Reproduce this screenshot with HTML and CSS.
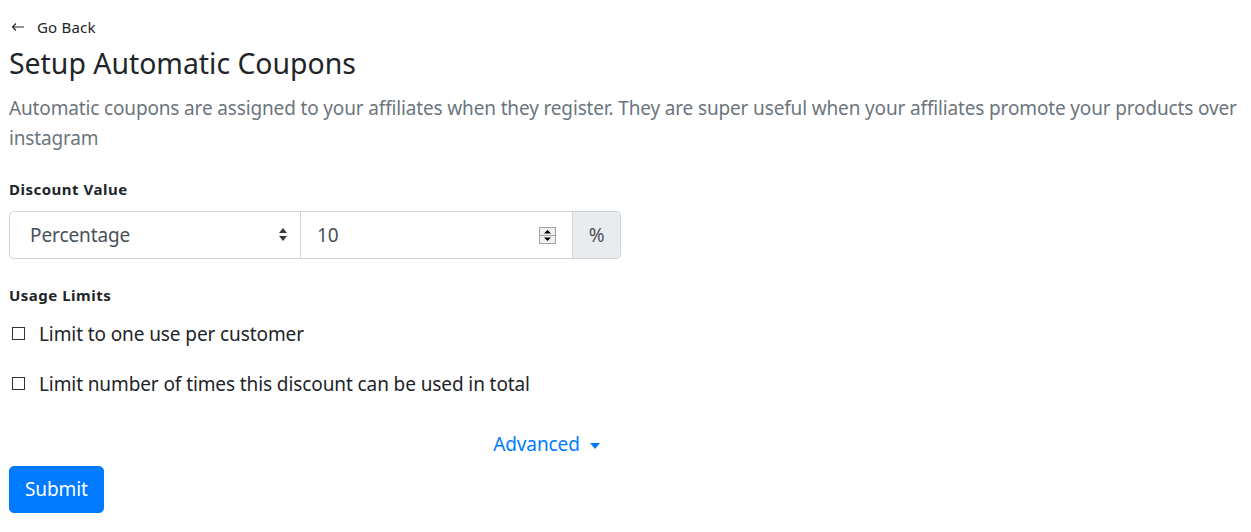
FILE: index.html
```html
<!DOCTYPE html>
<html lang="en">
<head>
<meta charset="utf-8">
<title>Setup Automatic Coupons</title>
<link rel="stylesheet" href="styles.css">
</head>
<body>
<div class="page">
  <a class="back" href="#">
    <svg class="back-icon" width="14" height="10" viewBox="0 0 14 10"><path d="M13 5H1.5M5 1.5L1.5 5 5 8.5" fill="none" stroke="#212529" stroke-width="1.1"/></svg>
    <span>Go Back</span>
  </a>
  <h3 class="title">Setup Automatic Coupons</h3>
  <p class="lead">Automatic coupons are assigned to your affiliates when they register. They are super useful when your affiliates promote your products over instagram</p>

  <form class="form">
    <div class="group group-discount">
      <label class="label">Discount Value</label>
      <div class="input-group">
        <div class="select-wrap">
          <select class="select"><option>Percentage</option><option>Fixed Amount</option></select>
          <svg class="select-arrow" width="8" height="13" viewBox="0 0 8 13"><path d="M4 0L8 5H0z M4 13L0 8h8z" fill="#343a40"/></svg>
        </div>
        <div class="num-field">
          <input class="num-input" type="text" value="10">
          <svg class="spinner" width="17" height="17" viewBox="0 0 17 17">
            <rect x="0.5" y="0.5" width="16" height="16" fill="#f0f0f0" stroke="#a3a3a3"/>
            <line x1="0.5" y1="8.5" x2="16.5" y2="8.5" stroke="#a3a3a3"/>
            <path d="M8.5 3L12 6.5H5z M8.5 14L5 10.5h7z" fill="#000"/>
          </svg>
        </div>
        <span class="addon">%</span>
      </div>
    </div>

    <div class="group group-usage">
      <label class="label">Usage Limits</label>
      <label class="check"><input type="checkbox" class="box"><span>Limit to one use per customer</span></label>
      <label class="check"><input type="checkbox" class="box"><span>Limit number of times this discount can be used in total</span></label>
    </div>

    <div class="advanced-row">
      <a class="advanced" href="#">Advanced<svg class="caret" width="10" height="6" viewBox="0 0 10 6"><path d="M0 0h10L5 6z" fill="#007bff"/></svg></a>
    </div>

    <button class="btn" type="submit">Submit</button>
  </form>
</div>
</body>
</html>
```

FILE: styles.css
```css
html, body {
  margin: 0;
  padding: 0;
  background: #fff;
}
body {
  font-family: "Noto Sans", "Open Sans", sans-serif;
  color: #212529;
}
.page {
  padding: 16px 9px 0 9px;
}
.back {
  display: flex;
  align-items: center;
  gap: 12px;
  color: #212529;
  text-decoration: none;
  font-size: 15px;
  line-height: 22px;
  padding-left: 2px;
  letter-spacing: 0.2px;
}
.title {
  margin: 8px 0 13px 0;
  font-size: 28.4px;
  font-weight: 400;
  line-height: 34px;
}
.lead {
  margin: 0 0 26px 0;
  font-size: 19px;
  letter-spacing: -0.15px;
  line-height: 30px;
  color: #6c757d;
  font-weight: 400;
}
.form {
  display: flex;
  flex-direction: column;
  align-items: flex-start;
}
.group {
  display: flex;
  flex-direction: column;
  align-items: stretch;
  width: 612px;
}
.group-discount {
  margin-bottom: 26px;
}
.label {
  font-size: 15px;
  font-weight: 700;
  letter-spacing: 0.5px;
  line-height: 21px;
}
.group-discount .label {
  margin-bottom: 11px;
}
.group-usage .label {
  margin-bottom: 13px;
}
.input-group {
  display: flex;
  height: 48px;
  font-size: 19px;
  letter-spacing: -0.1px;
}
.select-wrap {
  position: relative;
  width: 292px;
  flex: none;
}
.select {
  -webkit-appearance: none;
  appearance: none;
  width: 100%;
  height: 48px;
  border: 1px solid #ced4da;
  border-radius: 4.8px 0 0 4.8px;
  padding: 0 30px 0 20px;
  font: inherit;
  letter-spacing: inherit;
  color: #495057;
  background: #fff;
}
.select-arrow {
  position: absolute;
  right: 14px;
  top: 17px;
  pointer-events: none;
}
.num-field {
  display: flex;
  align-items: center;
  width: 272px;
  flex: none;
  border: 1px solid #ced4da;
  border-left: none;
  box-sizing: border-box;
  padding-right: 16px;
}
.num-input {
  flex: 1;
  min-width: 0;
  border: none;
  outline: none;
  font: inherit;
  color: #495057;
  padding: 0 0 0 16px;
  height: 46px;
  background: transparent;
}
.addon {
  display: flex;
  align-items: center;
  justify-content: center;
  width: 48px;
  box-sizing: border-box;
  border: 1px solid #ced4da;
  border-left: none;
  border-radius: 0 4.8px 4.8px 0;
  background: #e9ecef;
  color: #495057;
}
.check {
  display: flex;
  align-items: center;
  gap: 14px;
  font-size: 19px;
  letter-spacing: -0.1px;
  line-height: 30px;
  margin-bottom: 20px;
  padding-left: 3px;
}
.check:last-child {
  margin-bottom: 30px;
}
.box {
  -webkit-appearance: none;
  appearance: none;
  width: 13px;
  height: 13px;
  margin: 0;
  border: 1px solid #333;
  background: #fff;
  box-sizing: border-box;
  flex: none;
  position: relative;
  top: -1px;
}
.advanced-row {
  width: 1075px;
  text-align: center;
  margin-bottom: 7px;
}
.advanced {
  color: #007bff;
  text-decoration: none;
  font-size: 19px;
  letter-spacing: -0.1px;
  line-height: 30px;
}
.caret {
  margin-left: 10px;
  vertical-align: middle;
}
.btn {
  font: inherit;
  font-size: 19px;
  letter-spacing: -0.1px;
  line-height: 29px;
  color: #fff;
  background: #007bff;
  border: 1px solid #007bff;
  border-radius: 4.8px;
  padding: 8px 15px;
}
```
